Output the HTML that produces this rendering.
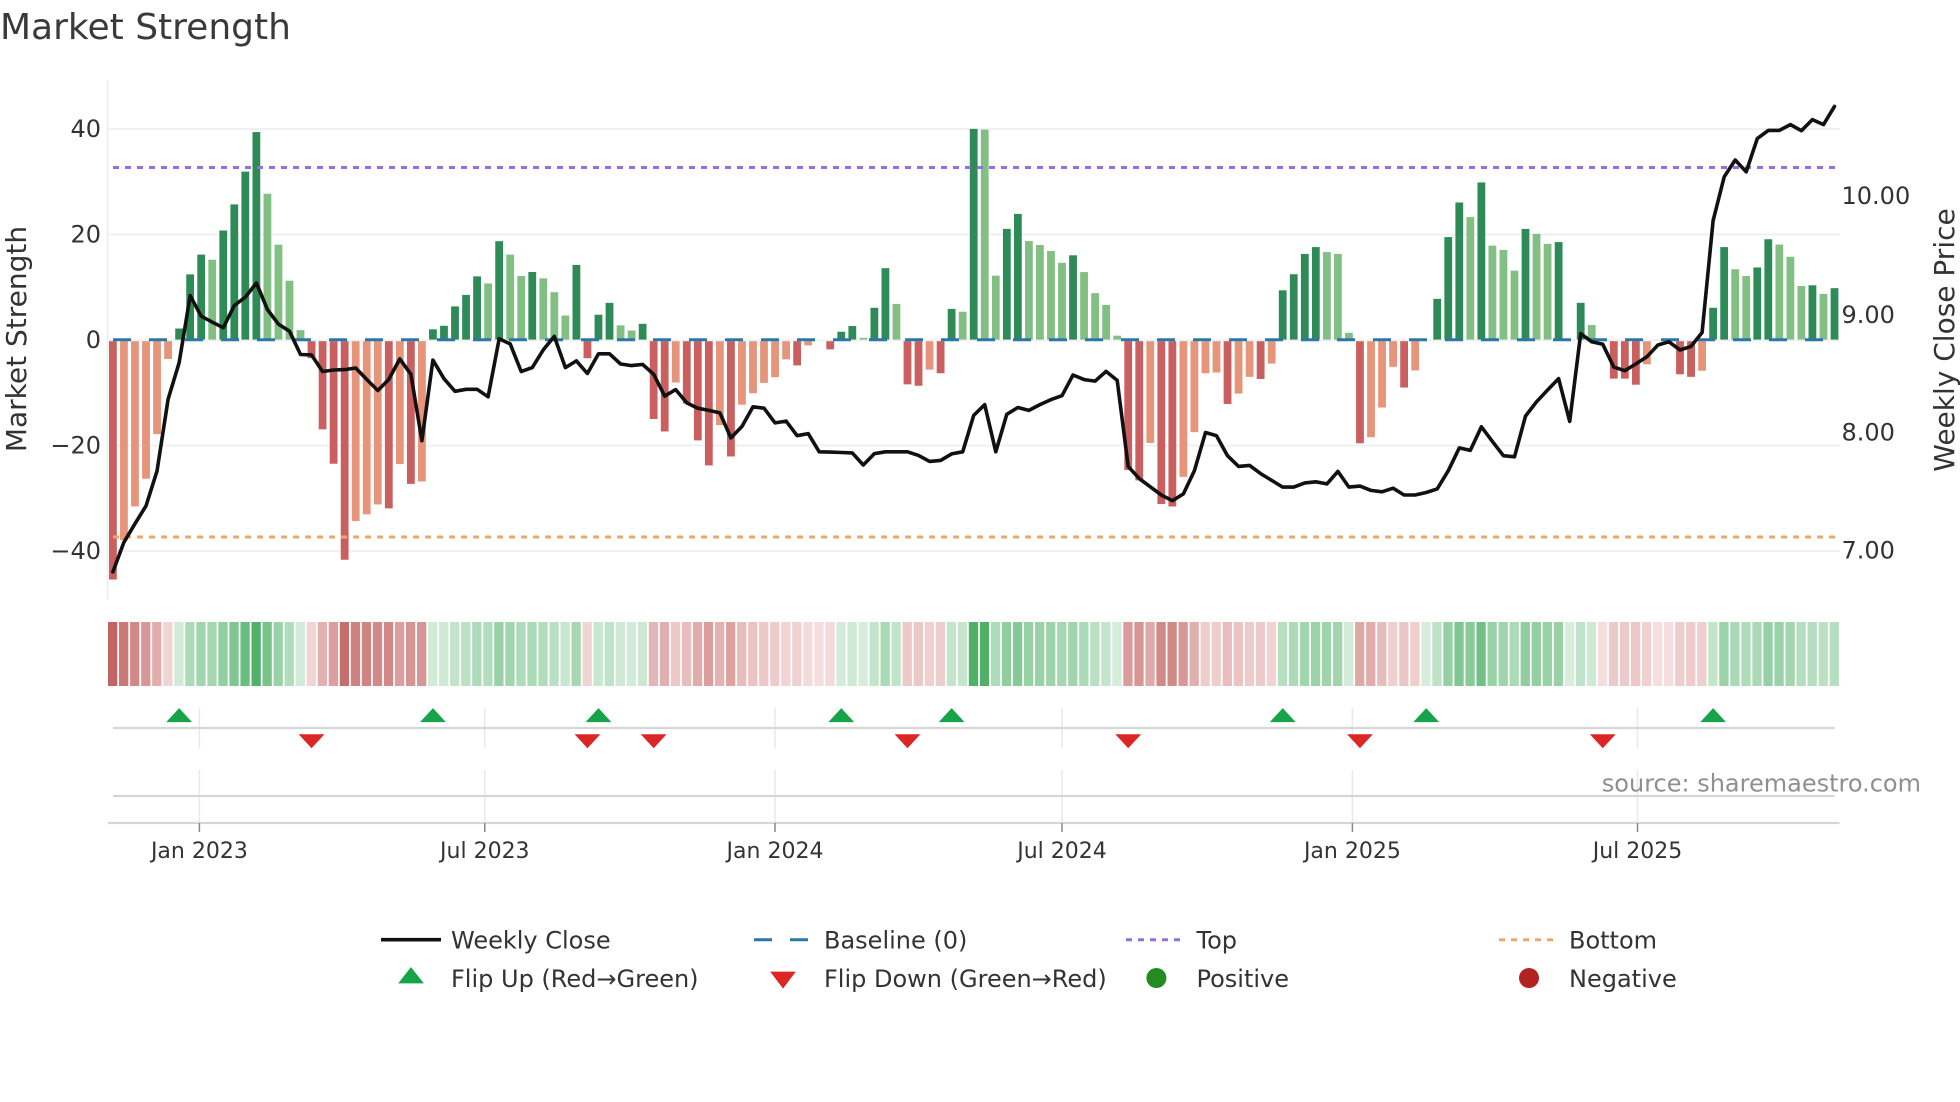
<!DOCTYPE html>
<html lang="en">
<head>
<meta charset="utf-8">
<title>Market Strength</title>
<style>
html,body{margin:0;padding:0;background:#fff;width:1960px;height:1102px;overflow:hidden}
svg{display:block}
text{font-family:"DejaVu Sans","Liberation Sans",sans-serif;fill:#333}
.t{font-size:24px}
.x{font-size:22px;text-anchor:middle}
.l{font-size:24px;text-anchor:end}
</style>
</head>
<body>
<svg xmlns="http://www.w3.org/2000/svg" width="1960" height="1102" viewBox="0 0 1960 1102">
<text x="0" y="39" style="font-size:36px;fill:#3a3a3a">Market Strength</text>

<g stroke="#f0f0f2" stroke-width="2" fill="none">
<line x1="107.5" y1="80" x2="107.5" y2="599"/>
<line x1="108" y1="129" x2="1840" y2="129"/>
<line x1="108" y1="234.500" x2="1840" y2="234.500"/>
<line x1="108" y1="340.400" x2="1840" y2="340.400"/>
<line x1="108" y1="445.500" x2="1840" y2="445.500"/>
<line x1="108" y1="551" x2="1840" y2="551"/>
</g>

<g id="bars"></g>

<line x1="113" y1="339.800" x2="1835" y2="339.800" stroke="#2a77a8" stroke-width="3" stroke-dasharray="18 18"/>
<line x1="113" y1="167.500" x2="1835" y2="167.500" stroke="#9370db" stroke-width="3" stroke-dasharray="6 6"/>
<line x1="113" y1="537" x2="1835" y2="537" stroke="#f0a56a" stroke-width="3" stroke-dasharray="6 6"/>

<polyline id="price" fill="none" stroke="#111" stroke-width="3.600" stroke-linejoin="round" stroke-linecap="round" points=""/>

<text class="l" x="101" y="137">40</text>
<text class="l" x="101" y="242.500">20</text>
<text class="l" x="101" y="348">0</text>
<text class="l" x="101" y="453.500">−20</text>
<text class="l" x="101" y="559">−40</text>

<text class="t" x="1841.500" y="204">10.00</text>
<text class="t" x="1841.500" y="323">9.00</text>
<text class="t" x="1841.500" y="440.500">8.00</text>
<text class="t" x="1841.500" y="558.500">7.00</text>

<text transform="translate(26 339) rotate(-90)" text-anchor="middle" style="font-size:28px">Market Strength</text>
<text transform="translate(1954 340) rotate(-90)" text-anchor="middle" style="font-size:28px">Weekly Close Price</text>

<g id="heat"></g>

<g stroke="#e8e8ee" stroke-width="1.500">
<line x1="199.400" y1="708" x2="199.400" y2="748"/><line x1="199.400" y1="770" x2="199.400" y2="823"/>
<line x1="484.800" y1="708" x2="484.800" y2="748"/><line x1="484.800" y1="770" x2="484.800" y2="823"/>
<line x1="775" y1="708" x2="775" y2="748"/><line x1="775" y1="770" x2="775" y2="823"/>
<line x1="1062" y1="708" x2="1062" y2="748"/><line x1="1062" y1="770" x2="1062" y2="823"/>
<line x1="1352.400" y1="708" x2="1352.400" y2="748"/><line x1="1352.400" y1="770" x2="1352.400" y2="823"/>
<line x1="1637.500" y1="708" x2="1637.500" y2="748"/><line x1="1637.500" y1="770" x2="1637.500" y2="823"/>
</g>

<g stroke="#d6d6d6" stroke-width="2.200">
<line x1="113" y1="728" x2="1834.500" y2="728"/>
<line x1="113" y1="796" x2="1834.500" y2="796"/>
<line x1="108" y1="823" x2="1839.500" y2="823"/>
</g>

<g id="marks"></g>

<g stroke="#888" stroke-width="1.500">
<line x1="199.400" y1="823" x2="199.400" y2="832"/>
<line x1="484.800" y1="823" x2="484.800" y2="832"/>
<line x1="775" y1="823" x2="775" y2="832"/>
<line x1="1062" y1="823" x2="1062" y2="832"/>
<line x1="1352.400" y1="823" x2="1352.400" y2="832"/>
<line x1="1637.500" y1="823" x2="1637.500" y2="832"/>
</g>
<text class="x" x="199.400" y="858">Jan 2023</text>
<text class="x" x="484.800" y="858">Jul 2023</text>
<text class="x" x="775" y="858">Jan 2024</text>
<text class="x" x="1062" y="858">Jul 2024</text>
<text class="x" x="1352.400" y="858">Jan 2025</text>
<text class="x" x="1637.500" y="858">Jul 2025</text>

<text x="1921" y="791.700" text-anchor="end" style="font-size:24px;fill:#8f8f8f">source: sharemaestro.com</text>

<line x1="381" y1="939.700" x2="441" y2="939.700" stroke="#111" stroke-width="3.600"/>
<text class="t" x="451" y="948.300">Weekly Close</text>
<polygon points="411,967.700 423,983 399,983" fill="#16a34a" stroke="#16a34a" stroke-width="0.8"/>
<text class="t" x="451" y="987">Flip Up (Red→Green)</text>

<line x1="754" y1="939.700" x2="808" y2="939.700" stroke="#2a77a8" stroke-width="3" stroke-dasharray="18 18"/>
<text class="t" x="824" y="948.300">Baseline (0)</text>
<polygon points="771,972 795,972 783,988" fill="#dc2626" stroke="#dc2626" stroke-width="0.8"/>
<text class="t" x="824" y="987">Flip Down (Green→Red)</text>

<line x1="1126" y1="939.700" x2="1182" y2="939.700" stroke="#9370db" stroke-width="3" stroke-dasharray="6 6"/>
<text class="t" x="1196.500" y="948.300">Top</text>
<circle cx="1156.400" cy="978" r="10" fill="#228b22"/>
<text class="t" x="1196.500" y="987">Positive</text>

<line x1="1499" y1="939.700" x2="1555" y2="939.700" stroke="#f0a56a" stroke-width="3" stroke-dasharray="6 6"/>
<text class="t" x="1569" y="948.300">Bottom</text>
<circle cx="1529" cy="978" r="10" fill="#b22222"/>
<text class="t" x="1569" y="987">Negative</text>
</svg>
<script>
(function(){
var NS="http://www.w3.org/2000/svg";
var A=[1465,-1365,-1280,-1210,-1097,-907,832,695,645,-658,584,518,435,335,-491,-620,-711,-836,905,1085,1172,1415,-1317,-1300,-1275,1285,-1173,1223,-1217,834,825,776,747,700,-718,611,-645,-699,689,-705,-740,-799,671,905,797,767,-824,-837,820];
var B=[1003,1038,-901,960,1063,1133,-1020,1108,-963,-931,-902,-886,-836,853,-797,784,808,761,745,-778,694,583,-683,906,910,-865,875,697,-705,193,-195,-604,473,431,-507,-518,-535,-568,547,-594,-653,-686,-772,1146,1175,-1070,1241,1248,-1165,-1040,-875,-873,961,-932,-885,891,-848,645,600,543,524,-538,-543,-764,1071,-1054,-971,-857,915,-867,782,669,496,399,-440,343,-520,-532,-590,473,-487,-515,510,782,680,-742,784,890,890,907,-850,785,785,878,885,-868,694,524,-586,-605,581,502,-517,-551,-633,631,-655,639];
var L1=[1447,1372,1325,1280,1192,1010,918,748,800,815,829,773,752,716,783,820,838,897,898,940,936,935,931,960,988,960,908,947,1115,911,958,990,985,985,1004,857,870,940,930,885,851,930,913,945,895,895,921,925,922];
var L2=[880,941,923,960,975,981,988,1058,1026,971,975,1016,1011,1052,1046,1097,1098,1099,1100,1134,1102,1097,1097,1097,1107,1124,1121,1103,1097,995,965,1097,992,973,981,965,951,940,882,895,899,872,897,1138,1172,1195,1218,1234,1215,1150,1043,1052,1108,1138,1135,1158,1177,1196,1196,1184,1181,1187,1152,1196,1193,1205,1209,1199,1218,1218,1211,1201,1150,1086,1093,1027,1068,1108,1111,997,957,924,892,1012,766,789,796,860,870,851,831,798,789,812,802,763,450,327,280,313,220,197,197,181,198,167,181,130];
var BASE=340.4,S=11.036;
function X(i){return 112.9+S*i;}
var h=[];
A.forEach(function(v){var l=v<0,y=Math.abs(v);h.push({l:l,d:(y-860)/2.53});});
B.forEach(function(v){var l=v<0,y=Math.abs(v);h.push({l:l,d:(y-783)/2.8});});
var bars=document.getElementById("bars"),heat=document.getElementById("heat"),marks=document.getElementById("marks");
function rect(p,x,y,w,ht,f){var r=document.createElementNS(NS,"rect");r.setAttribute("x",x.toFixed(2));r.setAttribute("y",y.toFixed(2));r.setAttribute("width",w);r.setAttribute("height",ht.toFixed(2));r.setAttribute("fill",f);p.appendChild(r);}
function c(a){return Math.max(0,Math.min(255,Math.round(a)));}
h.forEach(function(o,i){
  var neg=o.d>0,px=Math.abs(o.d),v=px/5.275,col;
  if(px>1.2){
    if(neg){col=o.l?"#e6957b":"#c95f5f";rect(bars,X(i)-3.9,BASE+0.8,7.8,px-0.8,col);}
    else{col=o.l?"#82bf82":"#2e8b57";rect(bars,X(i)-3.9,BASE-px-0.8,7.8,px,col);}
  }
  var f;
  if(neg){f="rgb("+c(245-1.13*v)+","+c(222-2.7*v)+","+c(222-2.75*v)+")";}
  else{f="rgb("+c(215-3.4*v)+","+c(238-1.55*v)+","+c(221-2.95*v)+")";}
  rect(heat,108+S*i,622,9.3,64,f);
});
var pts=[];
L1.forEach(function(y,i){pts.push(X(i).toFixed(1)+","+(y/2.53).toFixed(1));});
L2.forEach(function(y,i){pts.push(X(i+49).toFixed(1)+","+(60+y/2.8).toFixed(1));});
document.getElementById("price").setAttribute("points",pts.join(" "));
function tri(i,up){
  var p=document.createElementNS(NS,"polygon"),x=X(i);
  if(up){p.setAttribute("points",x+",708.7 "+(x+12)+",721.7 "+(x-12)+",721.7");p.setAttribute("fill","#16a34a");p.setAttribute("stroke","#16a34a");}
  else{p.setAttribute("points",(x-12)+",734.7 "+(x+12)+",734.7 "+x+",747.7");p.setAttribute("fill","#dc2626");p.setAttribute("stroke","#dc2626");}
  p.setAttribute("stroke-width","0.8");
  marks.appendChild(p);
}
[6,29,44,66,76,106,119,145].forEach(function(i){tri(i,true);});
[18,43,49,72,92,113,135].forEach(function(i){tri(i,false);});
})();
</script>
</body>
</html>
